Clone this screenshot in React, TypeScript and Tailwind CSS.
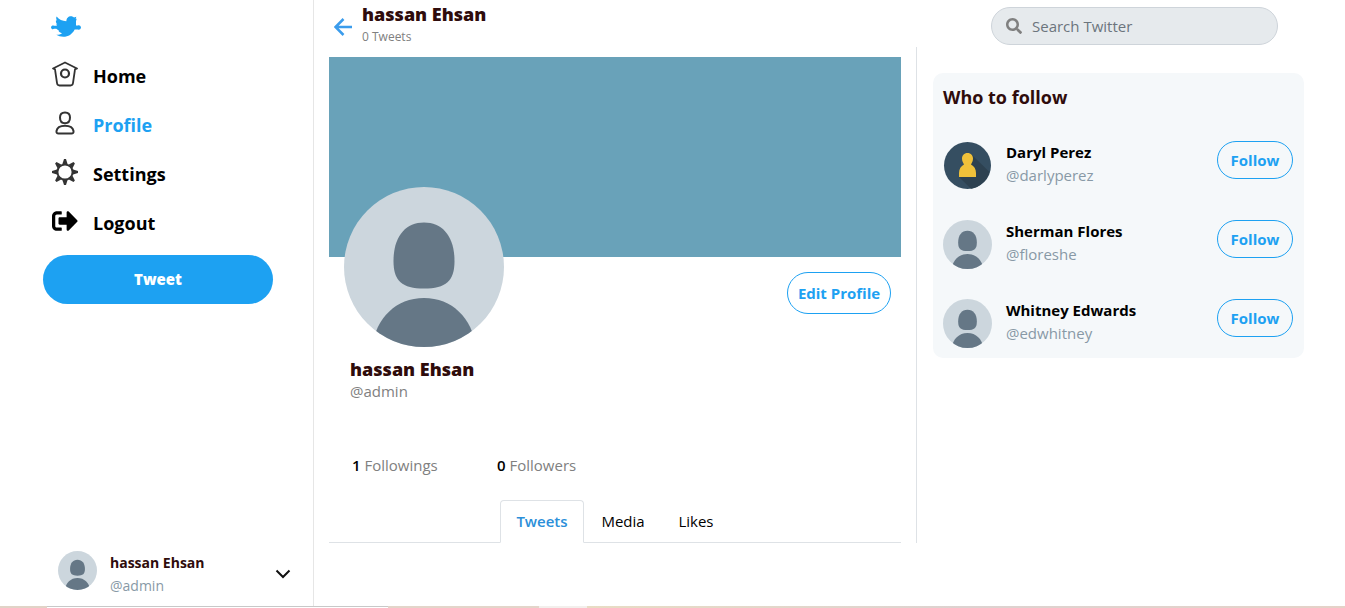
import type { ReactNode } from 'react';
import { FaSearch, FaSignOutAlt } from 'react-icons/fa';

type User = { name: string; handle: string; avatar: ReactNode };

function BirdLogo() {
  return (
    <svg viewBox="0 0 90 62" className="h-[21px] w-[30px]" fill="#1da1f2" aria-hidden="true">
      <path d="M17 1C24 10 34 15 46 15C46 6 52 0 60 0C64 0 67 2 69 4L76 2L74 8L77 8L75 15V28H81C84 26 89 28 90 34C89 40 84 42 81 40H71C64 54 52 62 37 62C29 62 22 60 16 56C24 56 29 55 33 51C28 50 24 47 22 43H25C21 42 18 40 16 38H9C6 41 1 39 0 34C1 28 6 27 9 29H18L15 24L19 25C15 20 14 16 15 12L18 13C15 9 15 4 17 1Z" />
    </svg>
  );
}

function HomeIcon() {
  return (
    <svg viewBox="0 0 26 26" className="size-[26px]" fill="none" stroke="#333" strokeWidth="1.8" strokeLinejoin="round" strokeLinecap="round" aria-hidden="true">
      <path d="M1 7.500L13 1.500L25 7.500L23 8.300L21 22Q20.700 24.500 18.500 24.500H7.500Q5.300 24.500 5 22L3 8.300Z" />
      <circle cx="13" cy="12.500" r="4" strokeWidth="2.200" />
    </svg>
  );
}

function ProfileIcon() {
  return (
    <svg viewBox="0 0 26 26" className="size-[26px]" fill="none" stroke="#333" strokeWidth="2" strokeLinejoin="round" aria-hidden="true">
      <path d="M13 2.500C16.500 2.500 18 4.500 18 7.500C18 11 16 13.200 13 13.200C10 13.200 8 11 8 7.500C8 4.500 9.500 2.500 13 2.500Z" />
      <path d="M4.500 21C5 18 8 15.700 13 15.700C18 15.700 21 18 21.500 21C21.800 22.600 21 23.500 19.500 23.500H6.500C5 23.500 4.200 22.600 4.500 21Z" />
    </svg>
  );
}

function SettingsIcon() {
  return (
    <svg viewBox="-13 -13 26 26" className="size-[26px]" aria-hidden="true">
      <circle r="7.600" fill="none" stroke="#333" strokeWidth="2" />
      {[0, 45, 90, 135, 180, 225, 270, 315].map((angle) => (
        <path key={angle} d="M-2.600 -8L-1 -13H1L2.600 -8Z" fill="#333" transform={`rotate(${angle})`} />
      ))}
    </svg>
  );
}

function DefaultAvatar({ className }: { className: string }) {
  return (
    <svg viewBox="0 0 160 160" className={`shrink-0 rounded-full ${className}`} aria-hidden="true">
      <rect width="160" height="160" fill="#ccd6dd" />
      <path d="M80 35.500C99 35.500 110.500 50 110.500 74C110.500 94 102 101.500 80 101.500C58 101.500 49.500 94 49.500 74C49.500 50 61 35.500 80 35.500Z" fill="#657786" />
      <path d="M28 160C32 131 52 111 80 111C108 111 128 131 132 160Z" fill="#657786" />
    </svg>
  );
}

function PawnAvatar() {
  return (
    <svg viewBox="0 0 49 49" className="size-[49px] shrink-0" aria-hidden="true">
      <circle cx="24.500" cy="24.500" r="23.500" fill="#354e61" />
      <path d="M29 14L46.500 31A23.500 23.500 0 0 1 28 47.800L16 36Z" fill="#2d4150" />
      <path d="M24.500 12C28 12 30 14.500 30 17.500C30 20 29 21.500 28 23.500C31 25 33 28 33 32V36H16V32C16 28 18 25 21 23.500C20 21.500 19 20 19 17.500C19 14.500 21 12 24.500 12Z" fill="#f0c13a" />
    </svg>
  );
}

const navItems = [
  { label: 'Home', icon: <HomeIcon />, active: false },
  { label: 'Profile', icon: <ProfileIcon />, active: true },
  { label: 'Settings', icon: <SettingsIcon />, active: false },
  { label: 'Logout', icon: <FaSignOutAlt className="size-[26px]" />, active: false },
];

const suggestions: User[] = [
  { name: 'Daryl Perez', handle: '@darlyperez', avatar: <PawnAvatar /> },
  { name: 'Sherman Flores', handle: '@floreshe', avatar: <DefaultAvatar className="size-[49px]" /> },
  { name: 'Whitney Edwards', handle: '@edwhitney', avatar: <DefaultAvatar className="size-[49px]" /> },
];

function Sidebar() {
  return (
    <aside className="flex w-[314px] shrink-0 flex-col border-r border-[#e6e6e6] pt-4 pb-[9px]">
      <a href="#" aria-label="Twitter" className="ml-[51px] self-start">
        <BirdLogo />
      </a>
      <nav className="mt-[14px] ml-[52px]">
        {navItems.map((item) => (
          <a
            key={item.label}
            href="#"
            className={`flex h-[49px] items-center gap-[15px] text-lg font-bold ${item.active ? 'text-[#1da1f2]' : 'text-black'}`}
          >
            <span className="pb-1 text-black">{item.icon}</span>
            {item.label}
          </a>
        ))}
      </nav>
      <button className="mt-2 ml-[43px] h-[49px] w-[230px] rounded-full bg-[#1da1f2] text-[15px] font-extrabold text-white">
        Tweet
      </button>
      <button className="mt-auto ml-[58px] flex items-center text-left">
        <DefaultAvatar className="size-[39px] self-start" />
        <span className="ml-[13px] flex w-[165px] flex-col text-sm leading-[23px]">
          <span className="font-bold text-[#2f0c0c]">hassan Ehsan</span>
          <span className="text-[#8899a6]">@admin</span>
        </span>
        <svg viewBox="0 0 16 10" className="h-[10px] w-4" fill="none" stroke="#111" strokeWidth="2" aria-hidden="true">
          <path d="M1.500 1.500L8 8L14.500 1.500" />
        </svg>
      </button>
    </aside>
  );
}

function Profile() {
  return (
    <main className="min-w-0 flex-1 px-[15px]">
      <header className="flex h-[57px] items-center gap-[10px] pb-1 pl-[5px]">
        <a href="#" aria-label="Back">
          <svg viewBox="0 0 18 18" className="size-[18px]" fill="none" stroke="#3b9cec" strokeWidth="2.500" aria-hidden="true">
            <path d="M18 9H2M9.500 1L1.500 9L9.500 17" />
          </svg>
        </a>
        <div className="pb-1">
          <h1 className="text-lg leading-6 font-extrabold text-[#2f0c0c]">hassan Ehsan</h1>
          <p className="text-xs leading-[22px] text-[#808080]">0 Tweets</p>
        </div>
      </header>

      <div className="h-[200px] bg-[#69a2b9]" />
      <div className="-mt-[70px] flex items-end justify-between pr-[10px] pl-[15px]">
        <DefaultAvatar className="size-40" />
        <button className="mb-[33px] h-[42px] w-[104px] rounded-full border border-[#1da1f2] text-[15px] font-bold text-[#1da1f2]">
          Edit Profile
        </button>
      </div>

      <div className="mt-[11px] pl-[21px]">
        <h2 className="text-lg leading-[22px] font-extrabold text-[#2f0c0c]">hassan Ehsan</h2>
        <p className="text-[15px] leading-[22px] text-[#808080]">@admin</p>
      </div>
      <div className="mt-[51px] flex pl-[23px] text-[15px] leading-6 text-[#808080]">
        <p className="w-[145px]">
          <b className="font-semibold text-black">1</b> Followings
        </p>
        <p>
          <b className="font-semibold text-black">0</b> Followers
        </p>
      </div>

      <div role="tablist" className="mt-[23px] flex justify-center border-b border-[#dee2e6] text-[15px] text-black">
        <button role="tab" aria-selected="true" className="-mb-px h-[43px] w-[84px] rounded-t border border-b-white border-[#dee2e6] bg-white font-semibold text-[#2b8fd9]">
          Tweets
        </button>
        <button role="tab" aria-selected="false" className="h-[42px] w-[78px]">Media</button>
        <button role="tab" aria-selected="false" className="h-[42px] w-[68px]">Likes</button>
      </div>
    </main>
  );
}

function Suggestions() {
  return (
    <div className="flex w-[429px] shrink-0 flex-col">
      <div className="h-[47px] pt-[7px] pl-[75px]">
        <label className="flex h-[38px] w-[287px] items-center gap-[10px] rounded-full border border-[#ced4da] bg-[#e6eaed] pl-[14px]">
          <FaSearch className="size-4 text-[#808080]" aria-hidden="true" />
          <input
            type="search"
            aria-label="Search Twitter"
            placeholder="Search Twitter"
            className="min-w-0 flex-1 bg-transparent text-[15px] text-[#495057] outline-none placeholder:text-[#6c757d]"
          />
        </label>
      </div>
      <div className="flex-1 border-l border-[#dee2e6] pt-[26px] pr-[41px] pl-4">
        <section className="rounded-[10px] bg-[#f5f8fa] px-[10px] pt-3 pb-[10px]">
          <h2 className="text-lg leading-6 font-bold text-[#2f0c0c]">Who to follow</h2>
          <ul className="mt-8 flex flex-col gap-[30px]">
            {suggestions.map((user) => (
              <li key={user.handle} className="flex h-[49px] items-start">
                {user.avatar}
                <div className="ml-[14px] flex-1 text-[15px] leading-[23px]">
                  <p className="font-bold text-black">{user.name}</p>
                  <p className="text-[#8899a6]">{user.handle}</p>
                </div>
                <button className="mr-px h-[38px] w-[76px] rounded-full border border-[#1da1f2] text-[15px] font-bold text-[#1da1f2]">
                  Follow
                </button>
              </li>
            ))}
          </ul>
        </section>
      </div>
    </div>
  );
}

export default function App() {
  return (
    <div className="flex min-h-screen flex-col bg-white font-['Open_Sans','Noto_Sans',sans-serif]">
      <div className="flex flex-1">
        <Sidebar />
        <div className="flex min-w-0 flex-1 items-stretch self-start">
          <Profile />
          <Suggestions />
        </div>
      </div>
      <footer className="flex h-[2px]">
        <div className="w-[47px] bg-[#e1d3c7]" />
        <div className="w-[341px] border-t border-[#c8c8c8]" />
        <div className="w-[151px] bg-[#e3d5ca]" />
        <div className="w-12 bg-[#f3efec]" />
        <div className="flex-1 bg-linear-to-r from-[#e8dcc4] via-[#ddd2d0] to-[#e5d2c8]" />
      </footer>
    </div>
  );
}
